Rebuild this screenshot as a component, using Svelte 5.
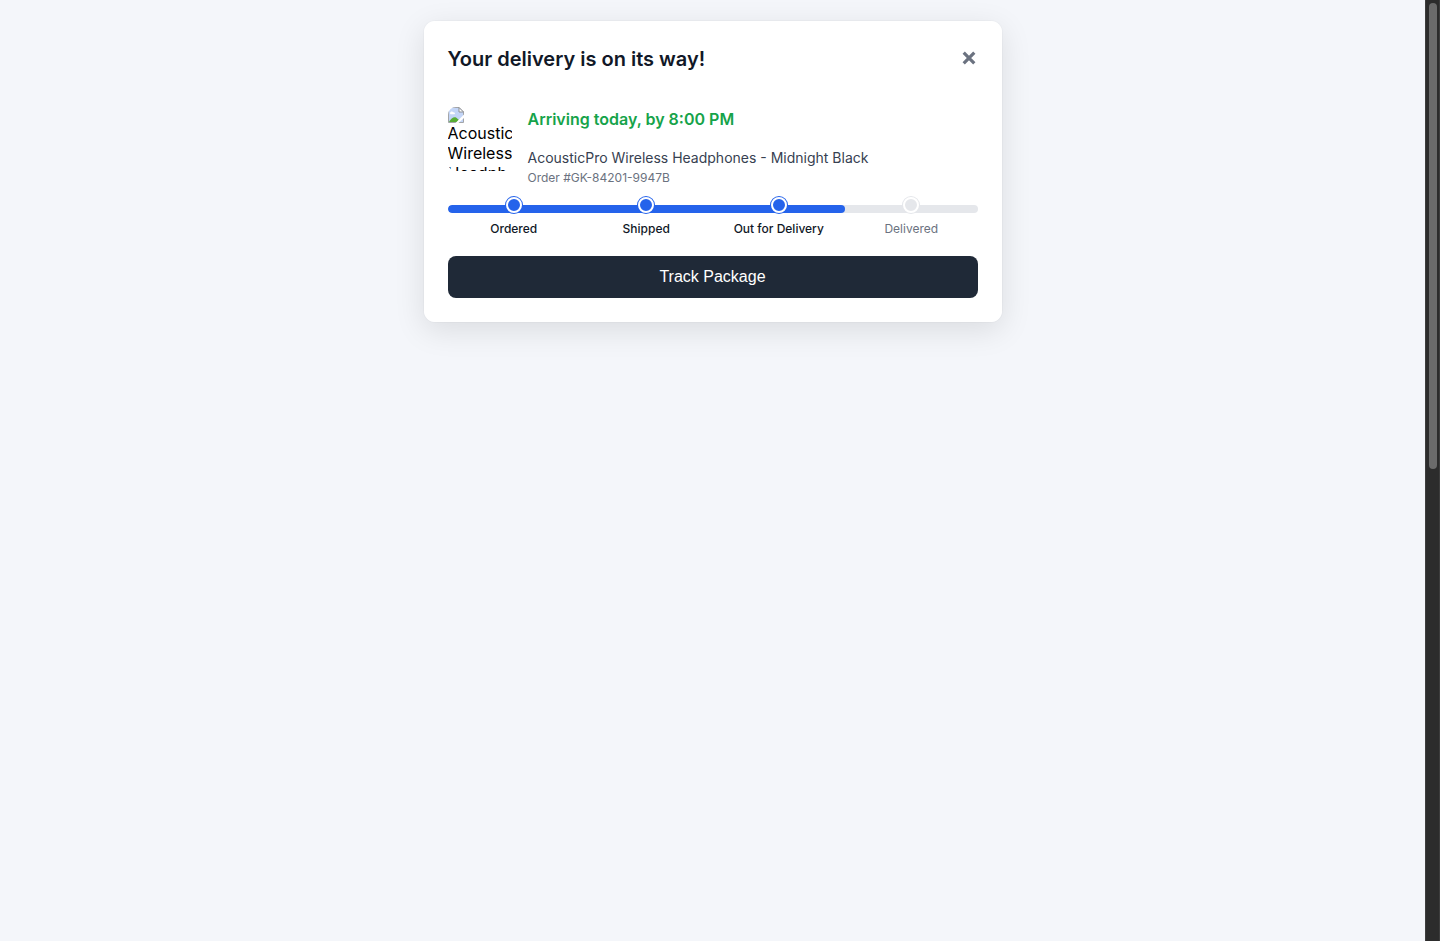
<script lang="ts">
  const steps = [
    { label: 'Ordered', done: true },
    { label: 'Shipped', done: true },
    { label: 'Out for Delivery', done: true },
    { label: 'Delivered', done: false }
  ];
  const progress = 75;
</script>

<div class="page">
  <main>
    <section class="card" aria-labelledby="title">
      <header>
        <h1 id="title">Your delivery is on its way!</h1>
        <button class="close" type="button" aria-label="Close">
          <svg width="14" height="14" viewBox="0 0 14 14" aria-hidden="true">
            <path d="M1.7 1.7L12.3 12.3M12.3 1.7L1.7 12.3" fill="none" stroke="currentColor" stroke-width="3.2" />
          </svg>
        </button>
      </header>

      <div class="product">
        <div class="thumb">
          <svg width="16" height="16" viewBox="0 0 16 16" aria-hidden="true">
            <path d="M.5 .5H11L15.5 5V15.5H.5Z" fill="#c3d5f7" stroke="#a3a5a8" />
            <path d="M2 6.5C2 4.5 4.5 4 5.2 5.2C7 5 7.5 7 6.5 7.2H2.5Z" fill="#fff" />
            <path d="M1 15C3 11 6 9.5 8 10.5L11 13L9 15Z" fill="#58ad35" />
            <path d="M16 7.5L7.5 16H10.5L16 11Z" fill="#fff" />
            <path d="M11 .5V5H15.5Z" fill="#fff" stroke="#8d9095" />
          </svg>
          <span>Acoustic Wireless Headphones</span>
        </div>
        <div class="details">
          <p class="eta">Arriving today, by 8:00 PM</p>
          <p class="name">AcousticPro Wireless Headphones - Midnight Black</p>
          <p class="order">Order #GK-84201-9947B</p>
        </div>
      </div>

      <div class="tracker">
        <div class="track"><div class="fill" style="width: {progress}%"></div></div>
        <ol>
          {#each steps as step}
            <li class:done={step.done}><span class="dot"></span>{step.label}</li>
          {/each}
        </ol>
      </div>

      <button class="cta" type="button">Track Package</button>
    </section>
  </main>
  <div class="scrollbar" aria-hidden="true"><div class="handle"></div></div>
</div>

<style>
  :global(body) {
    background: #f4f6fa;
  }
  .page {
    display: flex;
    min-height: 100vh;
    font-family: Inter, sans-serif;
  }
  main {
    flex: 1;
    padding: 20px;
  }
  .card {
    box-sizing: border-box;
    max-width: 580px;
    margin: 0 auto;
    padding: 24px;
    border: 1px solid rgba(0, 0, 0, 0.02);
    border-radius: 12px;
    background: #fff;
    background-clip: padding-box;
    box-shadow: 0 8px 30px rgba(0, 0, 0, 0.1);
  }
  header {
    display: flex;
    align-items: center;
    justify-content: space-between;
    margin-bottom: 34px;
  }
  h1 {
    margin: 0;
    font-size: 20px;
    line-height: 28px;
    font-weight: 600;
    color: #111827;
  }
  button {
    border: 0;
    cursor: pointer;
  }
  .close {
    display: flex;
    padding: 0 2px 2px;
    background: none;
    color: #6b7280;
  }
  .product {
    display: flex;
    gap: 16px;
  }
  .thumb {
    flex: none;
    width: 64px;
    height: 64px;
    overflow: hidden;
    border-radius: 8px;
    font-size: 16px;
    line-height: 20px;
    color: #000;
  }
  .thumb svg {
    display: block;
  }
  .thumb span {
    display: block;
  }
  p {
    margin: 0;
  }
  .eta {
    margin-bottom: 16px;
    font-size: 16px;
    line-height: 24px;
    font-weight: 600;
    color: #16a34a;
  }
  .name {
    font-size: 14px;
    line-height: 22px;
    color: #374151;
  }
  .order {
    font-size: 12px;
    line-height: 18px;
    color: #6b7280;
  }
  .tracker {
    display: grid;
    padding-top: 9px;
    margin-bottom: 19px;
  }
  .track {
    grid-area: 1 / 1;
    height: 8px;
    margin-top: 9px;
    overflow: hidden;
    border-radius: 4px;
    background: #e5e7eb;
  }
  .fill {
    height: 100%;
    border-radius: 4px;
    background: #2563eb;
  }
  ol {
    grid-area: 1 / 1;
    display: flex;
    margin: 0;
    padding: 0;
    list-style: none;
  }
  li {
    flex: 1;
    display: flex;
    flex-direction: column;
    align-items: center;
    gap: 8px;
    font-size: 12px;
    line-height: 16px;
    font-weight: 400;
    color: #6b7280;
  }
  li.done {
    font-weight: 500;
    color: #111827;
  }
  .dot {
    box-sizing: border-box;
    width: 16px;
    height: 16px;
    margin-top: 1px;
    border: 2px solid #fff;
    border-radius: 50%;
    background: #e5e7eb;
    box-shadow: 0 0 0 1px #e5e7eb;
  }
  .done .dot {
    background: #2563eb;
    box-shadow: 0 0 0 1px #2563eb;
  }
  .cta {
    display: block;
    width: 100%;
    padding: 12px;
    border-radius: 8px;
    background: #1f2937;
    color: #fff;
    font-family: "Liberation Sans", Arial, sans-serif;
    font-size: 16px;
    line-height: 18px;
    font-weight: 500;
  }
  .scrollbar {
    flex: none;
    box-sizing: border-box;
    width: 15px;
    padding: 3px;
    border: solid #3d3d3d;
    border-width: 0 1px;
    background: #2c2c2c;
    display: flex;
    flex-direction: column;
  }
  .handle {
    box-sizing: border-box;
    height: calc(50vh - 5px);
    width: 8px;
    border-radius: 4px;
    background: #6b6b6b;
  }
</style>
